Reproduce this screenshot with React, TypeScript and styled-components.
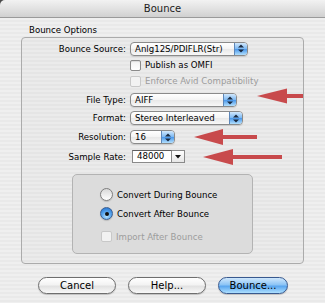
import React from "react";
import styled, { createGlobalStyle } from "styled-components";

const Global = createGlobalStyle`
  html, body { margin: 0; padding: 0; background: #ffffff; }
  body { font-family: "DejaVu Sans", "Noto Sans", sans-serif; }
`;

const Window = styled.div`
  position: relative;
  width: 325px;
  height: 303px;
  overflow: hidden;
  background: #4a4a4a;
  font-family: "DejaVu Sans", "Noto Sans", sans-serif;
  color: #000;
  display: flex;
  flex-direction: column;
`;

const TitleBar = styled.div`
  height: 17px;
  flex: none;
  border-bottom: 1px solid #9a9a9a;
  border-top-left-radius: 5px;
  background: linear-gradient(#f2f2f2, #e2e2e2 50%, #d0d0d0);
  display: flex;
  align-items: center;
  justify-content: center;
  font-size: 10px;
  color: #1c1c1c;
`;

const Body = styled.div`
  flex: 1;
  display: flex;
  flex-direction: column;
  background-color: #ededed;
  background-image: repeating-linear-gradient(
    to bottom,
    #efefef 0px,
    #efefef 2px,
    #e9e9e9 2px,
    #e9e9e9 4px
  );
`;

const GroupLabel = styled.div`
  margin: 6px 0 0 29px;
  height: 12px;
  line-height: 12px;
  font-size: 8.6px;
`;

const GroupBox = styled.div`
  margin: 1px 21px 0 21px;
  height: 227px;
  box-sizing: border-box;
  border: 1px solid #ababab;
  border-radius: 4px;
  background: rgba(0, 0, 0, 0.015);
  display: flex;
  flex-direction: column;
`;

const FormRow = styled.div<{ $h: number; $mt: number }>`
  display: grid;
  grid-template-columns: 104px auto;
  column-gap: 4px;
  align-items: center;
  height: ${(p) => p.$h}px;
  margin-top: ${(p) => p.$mt}px;
`;

const Label = styled.div`
  text-align: right;
  font-size: 8.6px;
  white-space: nowrap;
`;

const Popup = styled.div<{ $w: number }>`
  display: flex;
  width: ${(p) => p.$w}px;
  height: 14px;
  box-sizing: border-box;
  border: 1px solid #8a8a8a;
  border-radius: 4px;
  overflow: hidden;
  background: linear-gradient(#ffffff, #f4f4f4 50%, #e8e8e8 51%, #f8f8f8);
  box-shadow: 0 1px 1px rgba(0, 0, 0, 0.12);
`;

const PopupText = styled.div`
  flex: 1;
  padding-left: 4px;
  font-size: 8.6px;
  line-height: 12px;
  white-space: nowrap;
`;

const PopupArrows = styled.div`
  width: 12px;
  border-left: 1px solid #5d86b8;
  background: linear-gradient(#d2e8fc, #7db9f3 48%, #4a97ea 52%, #b3e0fd);
  display: flex;
  align-items: center;
  justify-content: center;
`;

const Combo = styled.div`
  display: flex;
  margin-left: 2px;
`;

const ComboField = styled.div`
  width: 40px;
  height: 13px;
  box-sizing: border-box;
  border: 1px solid #8a8a8a;
  border-top-color: #5e5e5e;
  background: #ffffff;
  font-size: 8.6px;
  line-height: 11px;
  padding-left: 4px;
`;

const ComboButton = styled.div`
  width: 13px;
  height: 13px;
  box-sizing: border-box;
  border: 1px solid #8a8a8a;
  border-left: none;
  background: linear-gradient(#ffffff, #e6e6e6);
  display: flex;
  align-items: flex-end;
  justify-content: center;
  padding-bottom: 3px;
`;

const CheckRow = styled.div`
  display: flex;
  align-items: center;
`;

const CheckBox = styled.div<{ $disabled?: boolean }>`
  width: 11px;
  height: 11px;
  box-sizing: border-box;
  border: 1px solid ${(p) => (p.$disabled ? "#c8c8c8" : "#8a8a8a")};
  border-radius: 2px;
  background: ${(p) =>
    p.$disabled ? "#f2f2f2" : "linear-gradient(#f2f2f2, #ffffff)"};
  box-shadow: ${(p) => (p.$disabled ? "none" : "inset 0 1px 1px rgba(0,0,0,0.1)")};
`;

const OptionText = styled.span<{ $disabled?: boolean; $size?: number }>`
  margin-left: 4px;
  font-size: ${(p) => p.$size ?? 8.6}px;
  color: ${(p) => (p.$disabled ? "#9c9c9c" : "#000")};
  white-space: nowrap;
`;

const InnerBox = styled.div`
  margin: 11px 0 0 50px;
  width: 181px;
  height: 80px;
  box-sizing: border-box;
  border: 1px solid #b3b3b3;
  border-radius: 5px;
  background: #dcdcdc;
  padding: 13px 0 0 27px;
  display: flex;
  flex-direction: column;
`;

const RadioRow = styled.div<{ $mt: number }>`
  display: flex;
  align-items: center;
  height: 13px;
  margin-top: ${(p) => p.$mt}px;
  margin-left: ${(p) => (p.$mt > 8 ? 1 : 0)}px;
`;

const Radio = styled.div<{ $on?: boolean }>`
  width: 13px;
  height: 13px;
  box-sizing: border-box;
  border-radius: 50%;
  border: 1px solid ${(p) => (p.$on ? "#3d5f8f" : "#7e7e7e")};
  background: ${(p) =>
    p.$on
      ? "radial-gradient(circle at 50% 75%, #b8e4ff 0%, #5aa6ee 45%, #2f7fd8 80%)"
      : "linear-gradient(#d8d8d8, #ffffff)"};
  display: flex;
  align-items: center;
  justify-content: center;
  box-shadow: 0 1px 1px rgba(0, 0, 0, 0.15);
`;

const Dot = styled.div`
  width: 4px;
  height: 4px;
  border-radius: 50%;
  background: #111;
`;

const ButtonRow = styled.div`
  margin-top: 13px;
  padding-left: 38px;
  display: flex;
  gap: 12px;
`;

const AquaButton = styled.div<{ $w: number; $default?: boolean }>`
  width: ${(p) => p.$w}px;
  height: 17px;
  box-sizing: border-box;
  border-radius: 9px;
  border: 1px solid ${(p) => (p.$default ? "#38598f" : "#6e6e6e")};
  background: ${(p) =>
    p.$default
      ? "linear-gradient(#cfe7fc, #8cc4f5 45%, #5aa6ef 55%, #aee0ff)"
      : "linear-gradient(#ffffff, #f3f3f3 45%, #e2e2e2 55%, #f8f8f8)"};
  box-shadow: 0 1px 1px rgba(0, 0, 0, 0.2);
  display: flex;
  align-items: center;
  justify-content: center;
  font-size: 10px;
  color: #000;
`;

const Overlay = styled.svg`
  position: absolute;
  left: 0;
  top: 0;
  pointer-events: none;
`;

const UpDown = () => (
  <svg width="6" height="9" viewBox="0 0 6 9">
    <path d="M0 3.5 L3 0.5 L6 3.5 Z" fill="#1a2a40" />
    <path d="M0 5.5 L3 8.5 L6 5.5 Z" fill="#1a2a40" />
  </svg>
);

const DownSmall = () => (
  <svg width="6" height="4" viewBox="0 0 6 4">
    <path d="M0 0 L6 0 L3 3.5 Z" fill="#111" />
  </svg>
);

const Arrow = ({
  tip,
  y,
  base,
  end,
  half,
}: {
  tip: number;
  y: number;
  base: number;
  end: number;
  half: number;
}) => (
  <g fill="#c84a4c">
    <path d={`M${tip} ${y} L${base} ${y - half} L${base} ${y + half} Z`} />
    <rect x={base - 1} y={y - 2} width={end - base + 1} height={4} />
  </g>
);

export default function App() {
  return (
    <>
      <Global />
      <Window>
        <TitleBar>Bounce</TitleBar>
        <Body>
          <GroupLabel>Bounce Options</GroupLabel>
          <GroupBox>
            <FormRow $h={15} $mt={3}>
              <Label>Bounce Source:</Label>
              <Popup $w={118}>
                <PopupText>Anlg12S/PDIFLR(Str)</PopupText>
                <PopupArrows>
                  <UpDown />
                </PopupArrows>
              </Popup>
            </FormRow>
            <FormRow $h={12} $mt={3}>
              <span />
              <CheckRow>
                <CheckBox />
                <OptionText>Publish as OMFI</OptionText>
              </CheckRow>
            </FormRow>
            <FormRow $h={12} $mt={4}>
              <span />
              <CheckRow>
                <CheckBox $disabled />
                <OptionText $disabled>Enforce Avid Compatibility</OptionText>
              </CheckRow>
            </FormRow>
            <FormRow $h={14} $mt={6}>
              <Label>File Type:</Label>
              <Popup $w={107}>
                <PopupText>AIFF</PopupText>
                <PopupArrows>
                  <UpDown />
                </PopupArrows>
              </Popup>
            </FormRow>
            <FormRow $h={14} $mt={4}>
              <Label>Format:</Label>
              <Popup $w={113}>
                <PopupText>Stereo Interleaved</PopupText>
                <PopupArrows>
                  <UpDown />
                </PopupArrows>
              </Popup>
            </FormRow>
            <FormRow $h={14} $mt={5}>
              <Label>Resolution:</Label>
              <Popup $w={45}>
                <PopupText>16</PopupText>
                <PopupArrows>
                  <UpDown />
                </PopupArrows>
              </Popup>
            </FormRow>
            <FormRow $h={13} $mt={6}>
              <Label>Sample Rate:</Label>
              <Combo>
                <ComboField>48000</ComboField>
                <ComboButton>
                  <DownSmall />
                </ComboButton>
              </Combo>
            </FormRow>
            <InnerBox>
              <RadioRow $mt={0}>
                <Radio />
                <OptionText>Convert During Bounce</OptionText>
              </RadioRow>
              <RadioRow $mt={6}>
                <Radio $on>
                  <Dot />
                </Radio>
                <OptionText>Convert After Bounce</OptionText>
              </RadioRow>
              <RadioRow $mt={10}>
                <CheckBox $disabled />
                <OptionText $disabled>Import After Bounce</OptionText>
              </RadioRow>
            </InnerBox>
          </GroupBox>
          <ButtonRow>
            <AquaButton $w={78}>Cancel</AquaButton>
            <AquaButton $w={78}>Help...</AquaButton>
            <AquaButton $w={70} $default>
              Bounce...
            </AquaButton>
          </ButtonRow>
        </Body>
        <Overlay width="325" height="303" viewBox="0 0 325 303">
          <Arrow tip={257} y={96} base={287} end={303} half={7.5} />
          <Arrow tip={194} y={137} base={223} end={257} half={8} />
          <Arrow tip={203} y={157} base={233} end={282} half={8} />
        </Overlay>
      </Window>
    </>
  );
}
